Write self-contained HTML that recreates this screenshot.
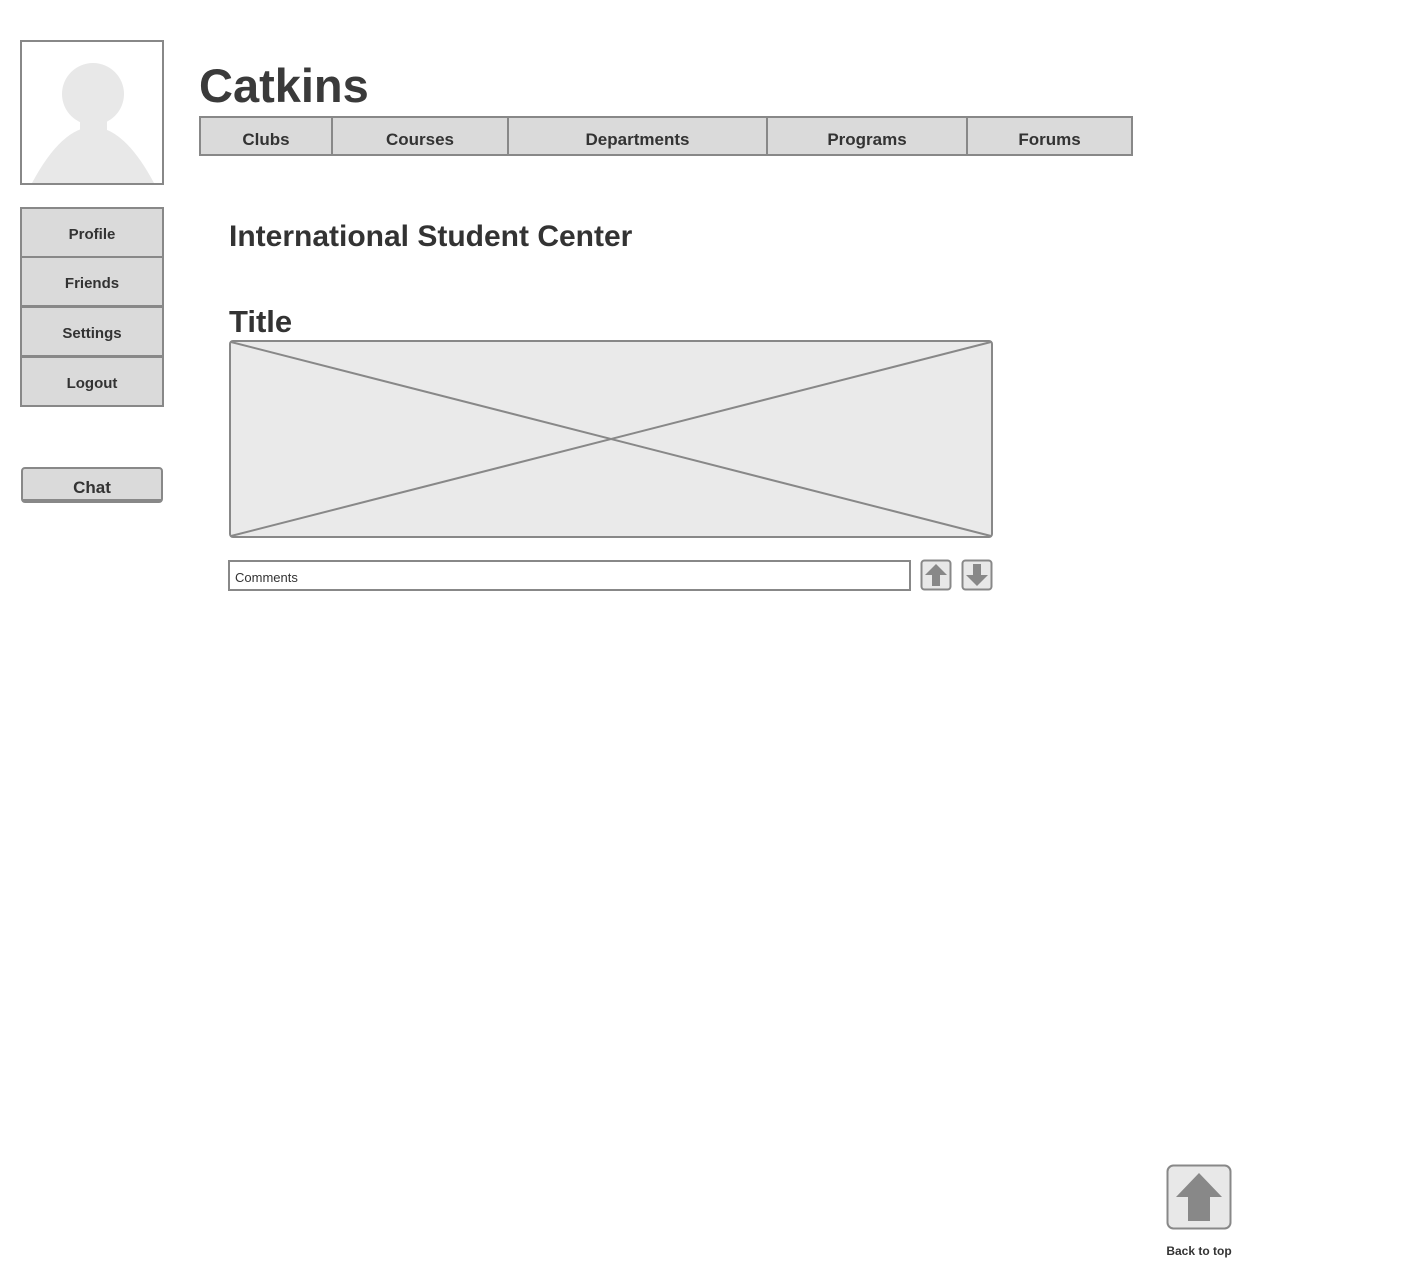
<!DOCTYPE html>
<html><head><style>
body{margin:0;width:1420px;height:1279px;background:#fff;font-family:"Liberation Sans",sans-serif;color:#333;position:relative;overflow:hidden}
.a{position:absolute;box-sizing:border-box}
.nav{top:116px;height:40px;background:#dadada;border:2px solid #888;font-weight:bold;font-size:17px;text-align:center;line-height:44px}
.side{left:20px;width:144px;height:51px;background:#dadada;border:2px solid #888;font-weight:bold;font-size:15px;text-align:center;line-height:52px}
</style></head><body>
<div class="a" style="left:20px;top:40px;width:144px;height:145px;border:2px solid #888;overflow:hidden">
<svg width="140" height="141"><circle cx="71" cy="52" r="31" fill="#e8e8e8"/><rect x="58" y="70" width="27" height="30" fill="#e8e8e8"/><path d="M10 141 Q40 85 71 85 Q102 85 132 141Z" fill="#e8e8e8"/></svg></div>
<div class="a" style="left:199px;top:58px;font-size:47px;font-weight:bold;color:#3a3a3a">Catkins</div>
<div class="a nav" style="left:199px;width:134px">Clubs</div>
<div class="a nav" style="left:331px;width:178px">Courses</div>
<div class="a nav" style="left:507px;width:261px">Departments</div>
<div class="a nav" style="left:766px;width:202px">Programs</div>
<div class="a nav" style="left:966px;width:167px">Forums</div>
<div class="a side" style="top:207px">Profile</div>
<div class="a side" style="top:256px">Friends</div>
<div class="a side" style="top:306px">Settings</div>
<div class="a side" style="top:356px">Logout</div>
<div class="a" style="left:21px;top:467px;width:142px;height:36px;background:#dadada;border:2px solid #888;border-bottom-width:4px;border-radius:4px;font-weight:bold;font-size:17px;text-align:center;line-height:38px">Chat</div>
<div class="a" style="left:229px;top:220px;font-size:30px;font-weight:bold">International Student Center</div>
<div class="a" style="left:229px;top:304px;font-size:31px;font-weight:bold">Title</div>
<svg class="a" style="left:229px;top:340px" width="764" height="198"><rect x="1" y="1" width="762" height="196" rx="3" fill="#eaeaea" stroke="#888" stroke-width="2"/><path d="M2 2L762 196M762 2L2 196" stroke="#888" stroke-width="2"/></svg>
<div class="a" style="left:228px;top:560px;width:683px;height:31px;border:2px solid #888;font-size:13px;padding:8px 5px">Comments</div>
<svg class="a" style="left:920px;top:559px" width="75" height="32"><rect x="1.5" y="1.5" width="29" height="29" rx="3" fill="#e8e8e8" stroke="#888" stroke-width="2"/><path d="M16 5L27 16H20V27H12V16H5Z" fill="#888"/><rect x="42.5" y="1.5" width="29" height="29" rx="3" fill="#e8e8e8" stroke="#888" stroke-width="2"/><path d="M57 27L68 16H61V5H53V16H46Z" fill="#888"/></svg>
<svg class="a" style="left:1166px;top:1164px" width="66" height="66"><rect x="1.5" y="1.5" width="63" height="63" rx="6" fill="#e8e8e8" stroke="#888" stroke-width="2"/><path d="M33 9L56 33H44V57H22V33H10Z" fill="#888"/></svg>
<div class="a" style="left:1160px;top:1244px;width:78px;text-align:center;font-size:12px;font-weight:bold">Back to top</div>
</body></html>
